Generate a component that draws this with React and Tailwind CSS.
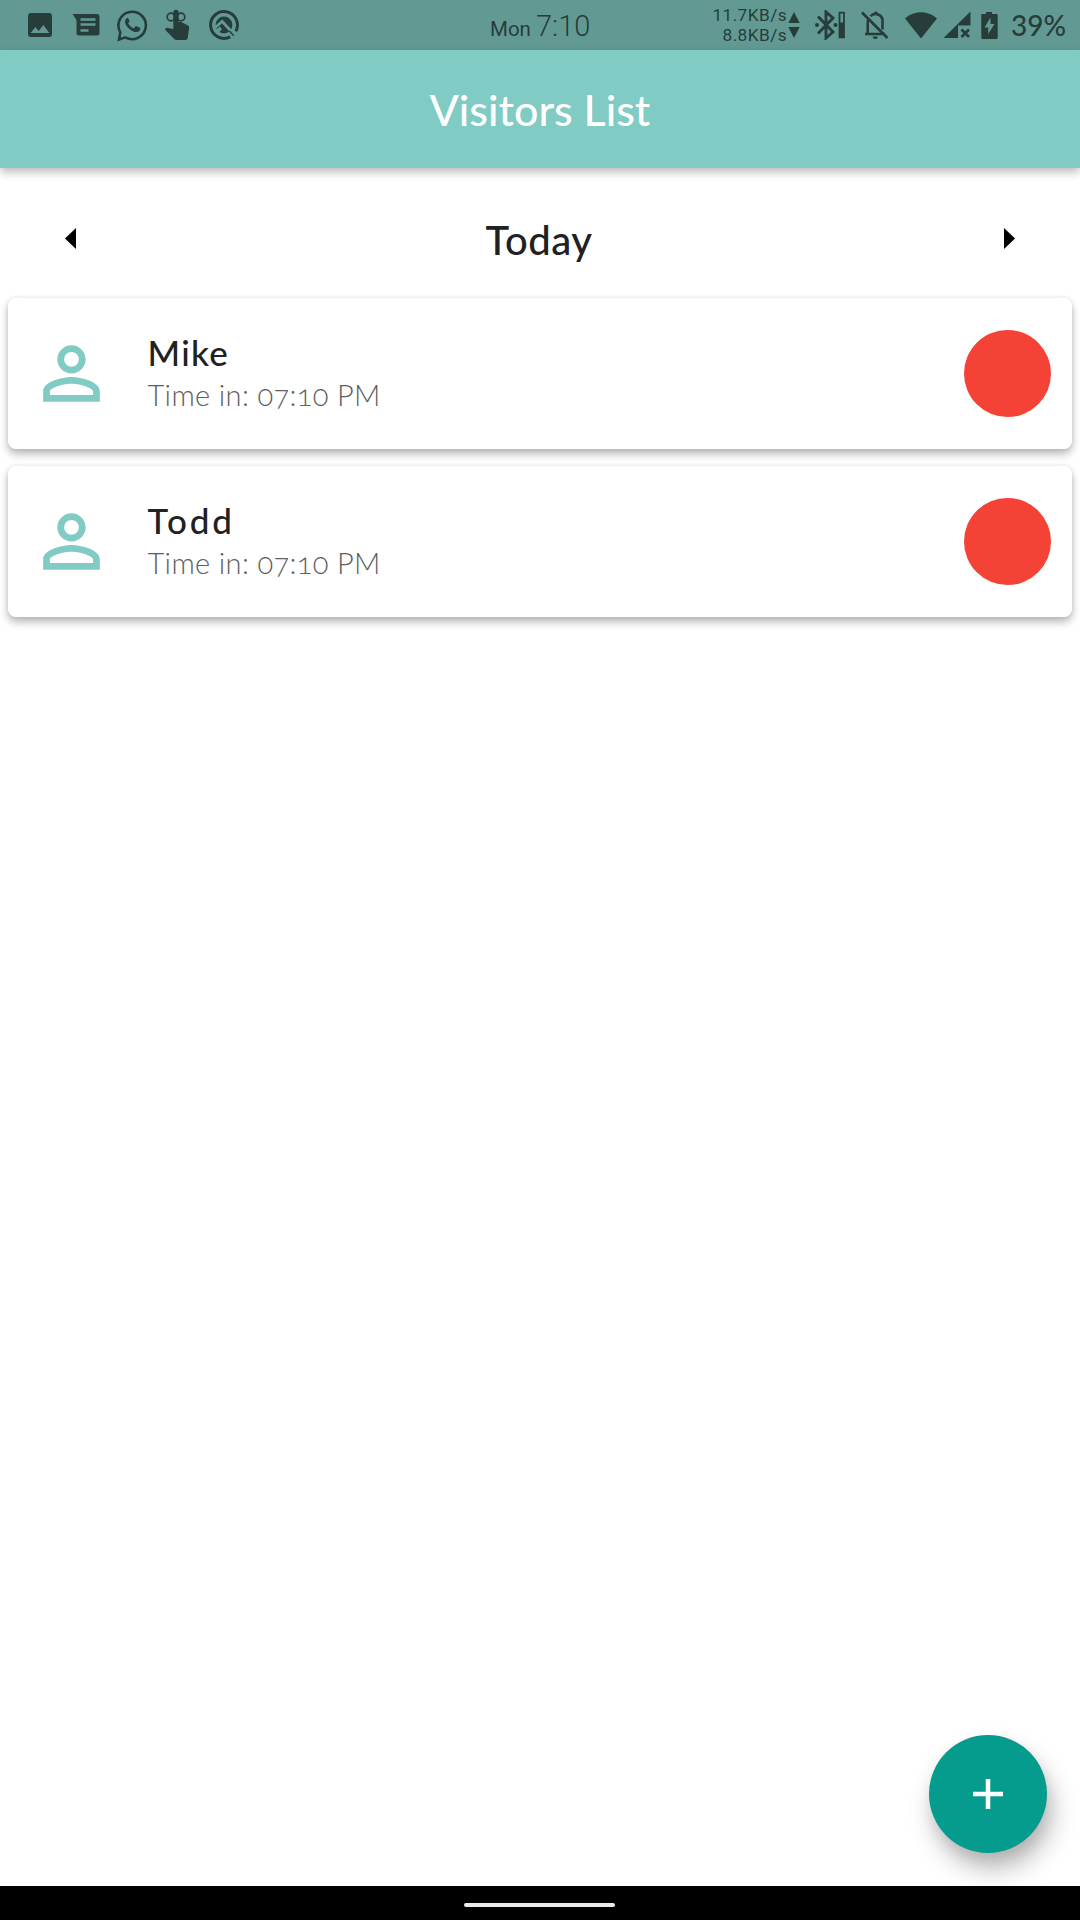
import React from "react";

const visitors = [
  { name: "Mike", spacing: "tracking-[1.300px]" },
  { name: "Todd", spacing: "tracking-[2.900px]" },
];

function StatusBar() {
  return (
    <div className="flex h-[50px] shrink-0 items-center bg-[#629a93] text-[#273d3a]">
      <svg className="ml-[24px] size-8 shrink-0" viewBox="0 0 24 24" fill="currentColor">
        <path d="M21 19V5c0-1.100-.9-2-2-2H5c-1.100 0-2 .9-2 2v14c0 1.100.9 2 2 2h14c1.100 0 2-.9 2-2zM8.500 13.500l2.500 3.010L14.500 12l4.500 6H5l3.500-4.500z" />
      </svg>
      <svg className="ml-[16px] h-[24px] w-[29px] shrink-0" viewBox="0 0 29 24" fill="none">
        <path d="M.5 1h24.500a2.500 2.500 0 0 1 2.500 2.500v16.500a2.500 2.500 0 0 1-2.500 2.500h-18a2.500 2.500 0 0 1-2.500-2.500V7z" fill="currentColor" />
        <path d="M8.500 6.500h15M8.500 11.500h15M8.500 17.500h8" stroke="#629a93" strokeWidth="2.400" />
      </svg>
      <svg className="ml-[15px] h-[33px] w-[32px] shrink-0" viewBox="0 0 32 33" fill="none">
        <path d="M4.300 23.300A13.700 13.700 0 1 1 9.300 28.300L3 30.500z" stroke="currentColor" strokeWidth="2.600" />
        <path d="M11.800 8.800c-.7 0-2.800 1.200-2.800 4 0 2.600 2 5.200 4.300 7.200 2.400 2 5.200 3.300 7.500 3.100 2-.2 3.500-1.700 3.500-3.300 0-.7-.2-.9-.8-1.200l-3-1.400c-.5-.2-.8-.1-1.100.3l-1.200 1.500c-.3.3-.6.3-1 .1-2.300-1-3.900-2.700-4.900-4.500-.2-.4-.1-.6.200-.9l.9-1.300c.2-.3.2-.6 0-1l-1.200-2.200c-.1-.3-.2-.4-.4-.4z" fill="currentColor" />
      </svg>
      <svg className="ml-[16px] h-[32px] w-[26px] shrink-0" viewBox="0 0 26 32">
        <path d="M9.300 14V3.500a2.700 2.700 0 0 1 5.400 0V13h2.500l6.800 3.500c1 .6 1.300 1.200 1.100 2.300l-1.300 9.500c-.2 1.700-1 2.700-2.600 2.700H12.500c-1 0-1.700-.4-2.300-1L.8 20.600l1-1.200c.5-.5 1.100-.6 1.800-.5l5.700 1.200z" fill="currentColor" />
        <circle cx="7" cy="8" r="3.800" fill="none" stroke="currentColor" strokeWidth="1.700" />
        <circle cx="17" cy="8" r="3.800" fill="none" stroke="currentColor" strokeWidth="1.700" />
      </svg>
      <svg className="ml-[18px] h-[32px] w-[32px] shrink-0" viewBox="0 0 32 32" fill="none">
        <path d="M22.200 27.800A13.400 13.400 0 1 1 27.800 22.300" stroke="currentColor" strokeWidth="3" />
        <circle cx="16" cy="16" r="8.400" fill="currentColor" />
        <path d="m6.500 19 7.700-6.500L27 26.500" stroke="#629a93" strokeWidth="2.800" />
        <path d="m6.500 22.500 5-5 2.500 2.500-3.500 4z" fill="#629a93" />
        <path d="m21.500 22 4.200 4.700" stroke="currentColor" strokeWidth="1.500" />
      </svg>
      <div className="ml-[250px] flex w-[104px] shrink-0 items-baseline whitespace-nowrap pt-[4px] font-['Roboto',sans-serif]">
        <span className="w-[46px] text-[20.500px]">Mon</span>
        <span className="text-[29px] font-light">7:10</span>
      </div>
      <div className="ml-[111px] w-[82px] shrink-0 whitespace-nowrap text-right font-['Roboto',sans-serif] text-[17.300px] leading-[20px] tracking-[0.400px]">
        <div>11.7KB/s</div>
        <div>8.8KB/s</div>
      </div>
      <svg className="ml-[1px] h-[26px] w-[12px] shrink-0" viewBox="0 0 12 26" fill="currentColor">
        <path d="M6 0 11.700 11H.3zM.3 15h11.400L6 26z" />
      </svg>
      <svg className="ml-[14px] h-[30px] w-[32px] shrink-0" viewBox="0 0 32 30" fill="none" stroke="currentColor">
        <path d="m4 6.500 15 15.500-7 6V2l7 6L4 23.500" strokeWidth="2.900" />
        <circle cx="3" cy="15" r="2" fill="currentColor" stroke="none" />
        <circle cx="21.500" cy="15" r="2" fill="currentColor" stroke="none" />
        <path d="M25.500 2.700h4.500v24.600h-4.500z" strokeWidth="1.800" />
        <path d="M25.500 12.500h4.500v14.800h-4.500z" fill="currentColor" stroke="none" />
      </svg>
      <svg className="ml-[14px] h-[30px] w-[30px] shrink-0" viewBox="0 0 30 30" fill="none" stroke="currentColor">
        <path d="m2 2.500 25.500 25.500" strokeWidth="2.600" />
        <path d="M5 24h20M7.700 23V12.500c0-1.500.3-3 1-4.200M10.500 6.200a7 7 0 0 1 12 5.800v7.500" strokeWidth="2.600" />
        <path d="M13.800 5V3.500a2 2 0 0 1 4 0V5zM12.800 26.500h5a2.500 2.500 0 0 1-5 0z" fill="currentColor" stroke="none" />
      </svg>
      <svg className="ml-[14px] h-[28px] w-[34px] shrink-0" viewBox="0 0 34 28" fill="currentColor">
        <path d="M17 27.500 1 7.500C5 3.500 11 1.200 17 1.200S29 3.500 33 7.500z" />
      </svg>
      <svg className="ml-[5px] h-[28px] w-[28px] shrink-0" viewBox="0 0 28 28" fill="currentColor">
        <path d="M27.500.5V14.500H15V27H.5z" />
        <path d="m18.500 18.500 7.500 7.500m0-7.500-7.500 7.500" fill="none" stroke="currentColor" strokeWidth="2.700" />
      </svg>
      <svg className="ml-[10px] h-[27px] w-[17px] shrink-0" viewBox="0 0 17 27">
        <path d="M5 0h6v2h4.500c.6 0 1.200.5 1.200 1.200v22.600c0 .6-.5 1.200-1.200 1.200h-14c-.7 0-1.200-.5-1.200-1.200V3.200C.3 2.500.8 2 1.500 2H5z" fill="currentColor" />
        <path d="M9.500 5.500 3.500 15.500h3.700V22L13.500 12h-4z" fill="#629a93" />
      </svg>
      <div className="ml-[13px] whitespace-nowrap font-['Lato',sans-serif] text-[28px] font-medium">39%</div>
    </div>
  );
}

function VisitorCard({ name, spacing }) {
  return (
    <li className="flex h-[151px] items-center rounded-[8px] bg-white shadow-[0_5px_9px_rgba(0,0,0,0.280),0_0_5px_rgba(0,0,0,0.080)]">
      <svg className="mb-px ml-[21px] size-[85px] shrink-0" viewBox="0 0 24 24" fill="#80cbc4">
        <path d="M12 5.900a2.100 2.100 0 1 1 0 4.200 2.100 2.100 0 0 1 0-4.200m0 9c2.970 0 6.100 1.460 6.100 2.100v1.100H5.900V17c0-.64 3.130-2.100 6.100-2.100M12 4C9.790 4 8 5.790 8 8s1.790 4 4 4 4-1.790 4-4-1.790-4-4-4zm0 9c-2.670 0-8 1.340-8 4v3h16v-3c0-2.660-5.330-4-8-4z" />
      </svg>
      <div className="ml-[33.500px] flex-1 whitespace-nowrap font-['Lato',sans-serif]">
        <div className={`text-[35px] font-medium leading-[41px] text-[#212121] ${spacing}`}>{name}</div>
        <div className="pt-[1px] text-[29px] font-light leading-[41px] tracking-[0.350px] text-[#606060] [font-variant-numeric:oldstyle-nums]">
          Time in: 07:10 PM
        </div>
      </div>
      <div className="mb-px mr-[21px] size-[87px] rounded-full bg-[#f44336]" />
    </li>
  );
}

export default function App() {
  return (
    <div className="flex h-[1920px] w-[1080px] flex-col overflow-hidden bg-white">
      <StatusBar />
      <header className="z-10 flex h-[118px] shrink-0 items-center justify-center bg-[#80cbc4] shadow-[0_4px_9px_rgba(0,0,0,0.280)]">
        <h1 className="whitespace-nowrap pt-[2px] font-['Lato',sans-serif] text-[43px] font-medium text-white">Visitors List</h1>
      </header>
      <main className="relative flex flex-1 flex-col px-2">
        <div className="flex h-[130px] shrink-0 items-center justify-between px-[57px] pt-[11px]">
          <svg className="h-[21px] w-[11px]" viewBox="0 0 11 21"><path d="M11 0v21L0 10.500z" /></svg>
          <h2 className="pr-[2px] pt-[2px] font-['Lato',sans-serif] text-[40px] font-medium leading-[48px] tracking-[0.500px] text-[#212121]">Today</h2>
          <svg className="h-[21px] w-[11px]" viewBox="0 0 11 21"><path d="M0 0v21l11-10.500z" /></svg>
        </div>
        <ul className="flex flex-col gap-[17px]">
          {visitors.map((v) => (
            <VisitorCard key={v.name} {...v} />
          ))}
        </ul>
        <button className="absolute bottom-[33.500px] right-[33.500px] flex size-[117.500px] items-center justify-center rounded-full bg-[#059c8d] shadow-[5px_16px_26px_rgba(0,0,0,0.260),2px_8px_14px_rgba(0,0,0,0.080)]">
          <svg className="size-[30px]" viewBox="0 0 30 30" stroke="#fff" strokeWidth="4.500"><path d="M15 0v30M0 15h30" /></svg>
        </button>
      </main>
      <footer className="z-10 flex h-[34px] shrink-0 justify-center bg-black pr-[2px] pt-[17px]">
        <div className="h-[4px] w-[151px] rounded-full bg-[#ececec]" />
      </footer>
    </div>
  );
}
